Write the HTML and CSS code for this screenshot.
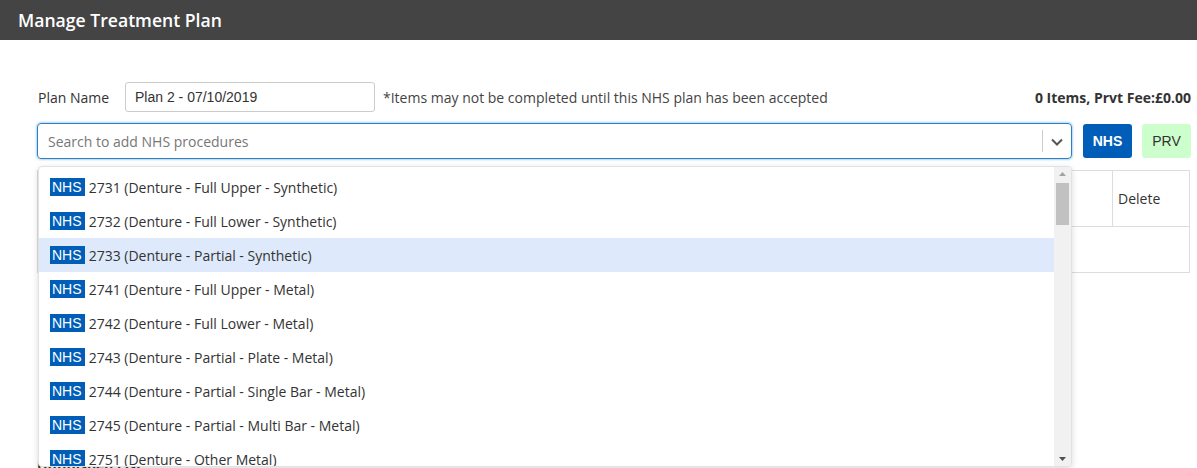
FILE: index.html
```html
<!DOCTYPE html>
<html>
<head>
<meta charset="utf-8">
<link rel="stylesheet" href="styles.css">
</head>
<body>
<div class="header"><span class="title">Manage Treatment Plan</span></div>
<div class="content">
  <div class="plan-row">
    <label class="plan-label">Plan Name</label>
    <div class="plan-input">Plan 2 - 07/10/2019</div>
    <span class="note">*Items may not be completed until this NHS plan has been accepted</span>
    <span class="totals">0 Items, Prvt Fee:£0.00</span>
  </div>
  <div class="search-row">
    <div class="select">
      <span class="placeholder">Search to add NHS procedures</span>
      <span class="sep"></span>
      <svg class="chev" width="14" height="10" viewBox="0 0 14 10"><path d="M2 2.5 L7 7.5 L12 2.5" fill="none" stroke="#555" stroke-width="2"/></svg>
    </div>
    <button class="btn btn-nhs">NHS</button>
    <button class="btn btn-prv">PRV</button>
    <div class="dropdown">
      <div class="list">
        <div class="item"><span class="badge">NHS</span> 2731 (Denture - Full Upper - Synthetic)</div>
        <div class="item"><span class="badge">NHS</span> 2732 (Denture - Full Lower - Synthetic)</div>
        <div class="item active"><span class="badge">NHS</span> 2733 (Denture - Partial - Synthetic)</div>
        <div class="item"><span class="badge">NHS</span> 2741 (Denture - Full Upper - Metal)</div>
        <div class="item"><span class="badge">NHS</span> 2742 (Denture - Full Lower - Metal)</div>
        <div class="item"><span class="badge">NHS</span> 2743 (Denture - Partial - Plate - Metal)</div>
        <div class="item"><span class="badge">NHS</span> 2744 (Denture - Partial - Single Bar - Metal)</div>
        <div class="item"><span class="badge">NHS</span> 2745 (Denture - Partial - Multi Bar - Metal)</div>
        <div class="item"><span class="badge">NHS</span> 2751 (Denture - Other Metal)</div>
      </div>
      <div class="scrollbar">
        <svg class="arrow" width="17" height="14" viewBox="0 0 17 14"><path d="M5 9 L8.5 5 L12 9 Z" fill="#a3a3a3"/></svg>
        <div class="thumb"></div>
        <div class="track"></div>
        <svg class="arrow" width="17" height="14" viewBox="0 0 17 14"><path d="M5 5 L8.5 9 L12 5 Z" fill="#505050"/></svg>
      </div>
    </div>
  </div>
  <table class="plan-table">
    <tr class="head"><th class="col-main"></th><th class="col-del">Delete</th></tr>
    <tr class="body"><td colspan="2"></td></tr>
  </table>
  <div class="unfinished">Unfinished List</div>
</div>
</body>
</html>
```
FILE: styles.css
```css
* { box-sizing: border-box; }
html, body { margin: 0; padding: 0; background: #fff; }
body {
  font-family: "Open Sans", "Liberation Sans", sans-serif;
  font-size: 14px;
  color: #333;
  width: 1197px;
  height: 468px;
  overflow: hidden;
}
.header {
  height: 40px;
  background: #444;
  display: flex;
  align-items: center;
  padding-left: 18px;
}
.title {
  color: #fff;
  font-size: 17.6px;
  font-weight: 600;
}
.content {
  padding: 42px 6px 0 37px;
  position: relative;
}
.plan-row {
  display: flex;
  align-items: center;
  height: 30px;
}
.plan-label {
  margin-left: 1px;
  width: 87px;
  font-size: 14px;
  color: #333;
}
.plan-input {
  width: 250px;
  height: 30px;
  border: 1px solid #ccc;
  border-radius: 3px;
  padding: 0 9px;
  display: flex;
  align-items: center;
  font-family: "Liberation Sans", Arial, sans-serif;
  font-size: 14px;
  color: #333;
}
.note {
  margin-left: 8px;
  font-size: 14px;
  color: #444;
}
.totals {
  margin-left: auto;
  font-size: 14px;
  font-weight: 700;
  color: #333;
}
.search-row {
  margin-top: 11px;
  display: flex;
  align-items: center;
  position: relative;
}
.select {
  width: 1035px;
  height: 36px;
  border: 1px solid #2f7fc1;
  border-radius: 4px;
  box-shadow: 0 0 2px 1px rgba(102, 175, 233, 0.5);
  display: flex;
  align-items: center;
  padding-left: 10px;
}
.placeholder {
  color: #777;
  font-size: 14px;
  flex: 1;
}
.sep {
  width: 1px;
  height: 22px;
  background: #ccc;
}
.chev { margin: 1px 7px 0 7px; }
.btn {
  height: 34px;
  width: 49px;
  border: none;
  border-radius: 3px;
  font-family: "Liberation Sans", Arial, sans-serif;
  font-size: 14px;
  padding: 0;
}
.btn-nhs {
  margin-left: 11px;
  background: #005eb8;
  color: #fff;
  font-weight: 700;
}
.btn-prv {
  margin-left: 10px;
  background: #ccffcc;
  color: #333;
}
.dropdown {
  position: absolute;
  left: 1px;
  top: 43px;
  width: 1034px;
  height: 301px;
  background: #fff;
  border: 1px solid #e2e2e2;
  border-radius: 4px;
  box-shadow: 0 2px 6px rgba(0, 0, 0, 0.15);
  display: flex;
  overflow: hidden;
  z-index: 5;
}
.list {
  flex: 1;
  padding-top: 3px;
  overflow: hidden;
}
.item {
  height: 34px;
  display: flex;
  align-items: center;
  padding-left: 11px;
  font-size: 14px;
  color: #333;
  white-space: pre;
}
.item.active { background: #deeafb; }
.badge {
  background: #005eb8;
  color: #fff;
  font-family: "Liberation Sans", Arial, sans-serif;
  font-size: 14px;
  height: 18px;
  line-height: 18px;
  padding: 0 2px;
  width: 35px;
  display: inline-block;
}
.scrollbar {
  width: 17px;
  background: #f1f1f1;
  display: flex;
  flex-direction: column;
}
.arrow { display: block; flex: none; }
.thumb {
  height: 42px;
  margin: 2px 2px 0 2px;
  background: #c1c1c1;
  flex: none;
}
.track { flex: 1; }
.plan-table {
  margin-top: 11px;
  width: 1153px;
  border-collapse: collapse;
  border: 1px solid #8a8a8a;
}
.plan-table th, .plan-table td {
  border: 1px solid #ddd;
  text-align: left;
  font-weight: 400;
  font-size: 14px;
  color: #333;
}
.plan-table tr.head th { height: 56px; padding-left: 5px; }
.plan-table tr.body td { height: 46px; }
.col-del { width: 77px; }
.unfinished {
  margin-top: 183px;
  font-weight: 700;
  font-size: 14px;
  color: #333;
}
```
